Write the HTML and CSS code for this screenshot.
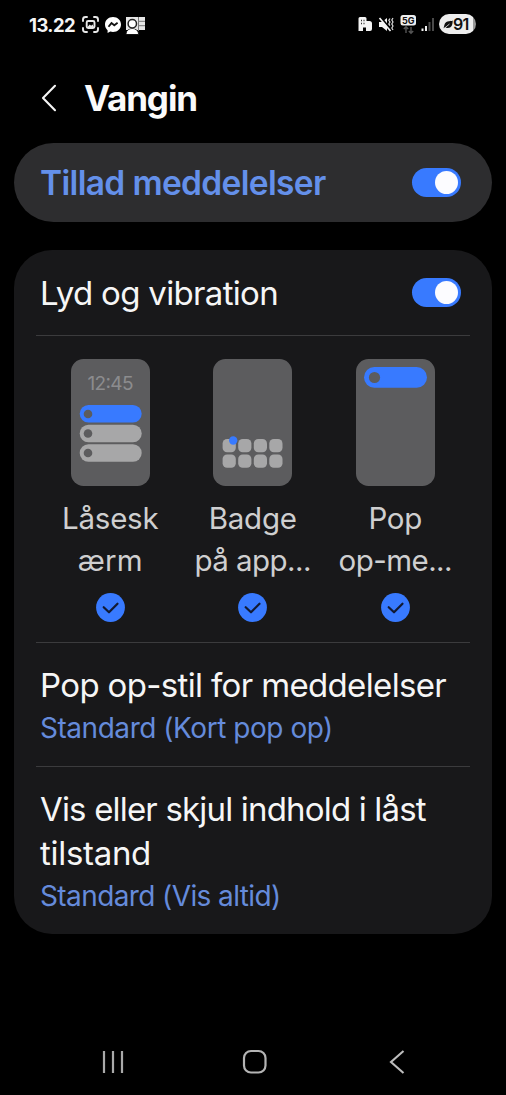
FILE: index.html
```html
<!DOCTYPE html>
<html lang="da">
<head>
<meta charset="utf-8">
<title>Vangin</title>
<link rel="stylesheet" href="styles.css">
</head>
<body>
<div class="screen">
  <header class="status">
    <span class="clock">13.22</span>
    <svg class="status-left" width="66" height="20" viewBox="0 0 66 20" fill="none">
      <g stroke="#e8e8e8" stroke-width="1.900" stroke-linecap="round">
        <path d="M2 6V4.500Q2 2 4.500 2H6M13 2h1.500Q17 2 17 4.500V6M17 13v1.500q0 2.500-2.500 2.500H13M6 17H4.500Q2 17 2 14.500V13"/>
        <rect x="5.700" y="6" width="7.800" height="7" rx="1.500"/>
      </g>
      <path d="M6.500 12l2.200-2.500 1.500 1.200 1.300-1.200 1.500 2.500z" fill="#e8e8e8"/>
      <path d="M32 2c-4.700 0-8 3.300-8 7.500 0 2.500 1 4.400 2.600 5.700V18l2.700-1.400c.9.300 1.800.400 2.700.400 4.700 0 8-3.300 8-7.500S36.700 2 32 2z" fill="#fff"/>
      <path d="M27.500 11.800l3-3.700 2.800 2.200 3.300-2.500" stroke="#111" stroke-width="1.800"/>
      <path d="M45 2h19v13H45z" fill="#e6e6e6"/>
      <path d="M57.500 2v14M58 6.300h6M58 10.700h6" stroke="#777" stroke-width="1"/>
      <path d="M45 19.500c0-4 2.500-5.500 6.300-5.500s6.200 1.500 6.200 5.500z" fill="#fff" stroke="#111" stroke-width="1"/>
      <circle cx="51.300" cy="8.700" r="4.200" fill="#fff" stroke="#222" stroke-width="1.500"/>
      <path d="M46 18.800c0-3 2-4.800 5.300-4.800s5.300 1.800 5.300 4.800z" fill="#fff"/>
    </svg>
    <svg class="status-right" width="78" height="22" viewBox="0 0 78 22" fill="none">
      <path d="M1.500 3.500Q1.500 2 3 2h5q1.500 0 1.500 1.500V6h3q2.500 0 2.500 2.500V14q0 2-2 2H9v-3.500H6V16H1.500z" fill="#f4f4f4"/>
      <path d="M4 5.500h1M6.500 5.500h1M4 8.500h1M6.500 8.500h1" stroke="#333" stroke-width="1.300"/>
      <path d="M22 7h3l5-4v13l-5-4h-3z" fill="#f4f4f4"/>
      <path d="M23.500 2l10.500 13" stroke="#000" stroke-width="2"/>
      <path d="M22.500 3l11 13" stroke="#f4f4f4" stroke-width="1.700"/>
      <path d="M33 3.500l-1.200 1.800 1.200 1.800-1.200 1.800 1.200 1.800M36 3l-1.200 2 1.200 2-1.200 2 1.200 2-1.200 2 1.200 2" stroke="#ddd" stroke-width="1.200"/>
      <rect x="43.500" y="0" width="15.500" height="10.500" rx="2.500" fill="#eee"/>
      <text class="net" x="51.200" y="8.500" text-anchor="middle">5G</text>
      <path d="M49 18v-6M46.800 14l2.200-2.300 2.200 2.300M54 12v6M51.800 16l2.200 2.300 2.200-2.300" stroke="#555" stroke-width="1.400"/>
      <path d="M65.500 16v-2.500M69 16v-5" stroke="#f0f0f0" stroke-width="2"/>
      <path d="M72.500 16V7M76 16V3" stroke="#4a4a4a" stroke-width="2"/>
    </svg>
    <span class="battery">
      <svg width="10" height="9" viewBox="0 0 10 9"><path d="M.500 8.300C1.500 6 1 2.500 4.500 1.500 6.500.900 8.500 1.300 9.700.500 9.700 5 8.500 8 4.800 8 3.500 8 3 7.300 2.500 7.200z" fill="#111"/><path d="M1 8.500L6.500 4" stroke="#eee" stroke-width=".8"/></svg>
      <span>91</span>
    </span>
  </header>

  <div class="titlebar">
    <svg class="back" width="16" height="28" viewBox="0 0 16 28" fill="none"><path d="M14 1.800L2 14l12 12.200" stroke="#f5f5f5" stroke-width="2.100" stroke-linecap="round" stroke-linejoin="round"/></svg>
    <h1 class="title">Vangin</h1>
  </div>

  <section class="allow">
    <span class="allow-text">Tillad meddelelser</span>
    <span class="toggle"><span class="knob"></span></span>
  </section>

  <main class="card">
    <div class="row sound">
      <span class="label t-sound">Lyd og vibration</span>
      <span class="toggle"><span class="knob"></span></span>
    </div>
    <div class="types">
      <div class="type">
        <svg width="79" height="127" viewBox="0 0 79 127">
          <rect width="79" height="127" rx="12.500" fill="#5c5c5e"/>
          <text class="mini-clock" x="39.500" y="31" text-anchor="middle" textLength="46">12:45</text>
          <rect x="8.700" y="46" width="62" height="17.500" rx="8.750" fill="#387aff"/>
          <rect x="8.700" y="65.700" width="62" height="17.500" rx="8.750" fill="#a7a7a8"/>
          <rect x="8.700" y="85.300" width="62" height="17.500" rx="8.750" fill="#a7a7a8"/>
          <g fill="#5c5c5e"><circle cx="17" cy="55" r="4.300"/><circle cx="17" cy="74.500" r="4.300"/><circle cx="17" cy="94" r="4.300"/></g>
        </svg>
        <p class="caption"><span class="wide">Låsesk</span><br><span class="wider">ærm</span></p>
        <svg class="check" width="29" height="29" viewBox="0 0 29 29" fill="none"><circle cx="14.500" cy="14.500" r="14.400" fill="#387aff"/><path d="M7.700 14.200l5.300 5.100 8.500-8.600" stroke="#121a33" stroke-width="2.200" stroke-linecap="round" stroke-linejoin="round"/></svg>
      </div>
      <div class="type">
        <svg width="79" height="127" viewBox="0 0 79 127">
          <rect width="79" height="127" rx="12.500" fill="#5c5c5e"/>
          <g fill="#a7a7a8">
            <rect x="9.600" y="80" width="13.200" height="13.200" rx="4.500"/><rect x="25.200" y="80" width="13.200" height="13.200" rx="4.500"/><rect x="40.800" y="80" width="13.200" height="13.200" rx="4.500"/><rect x="56.300" y="80" width="13.200" height="13.200" rx="4.500"/>
            <rect x="9.600" y="95.500" width="13.200" height="13.200" rx="4.500"/><rect x="25.200" y="95.500" width="13.200" height="13.200" rx="4.500"/><rect x="40.800" y="95.500" width="13.200" height="13.200" rx="4.500"/><rect x="56.300" y="95.500" width="13.200" height="13.200" rx="4.500"/>
          </g>
          <circle cx="20.200" cy="81.500" r="4.200" fill="#387aff"/>
        </svg>
        <p class="caption"><span class="wide">Badge</span><br><span>på app...</span></p>
        <svg class="check" width="29" height="29" viewBox="0 0 29 29" fill="none"><circle cx="14.500" cy="14.500" r="14.400" fill="#387aff"/><path d="M7.700 14.200l5.300 5.100 8.500-8.600" stroke="#121a33" stroke-width="2.200" stroke-linecap="round" stroke-linejoin="round"/></svg>
      </div>
      <div class="type">
        <svg width="79" height="127" viewBox="0 0 79 127">
          <rect width="79" height="127" rx="12.500" fill="#5c5c5e"/>
          <rect x="8" y="8" width="63" height="20.800" rx="10.400" fill="#387aff"/>
          <circle cx="18.500" cy="18.500" r="5.600" fill="#5c5c5e"/>
        </svg>
        <p class="caption"><span class="wide">Pop</span><br><span>op-me...</span></p>
        <svg class="check" width="29" height="29" viewBox="0 0 29 29" fill="none"><circle cx="14.500" cy="14.500" r="14.400" fill="#387aff"/><path d="M7.700 14.200l5.300 5.100 8.500-8.600" stroke="#121a33" stroke-width="2.200" stroke-linecap="round" stroke-linejoin="round"/></svg>
      </div>
    </div>
    <div class="row setting">
      <span class="label t-style">Pop op-stil for meddelelser</span>
      <span class="value v-style">Standard (Kort pop op)</span>
    </div>
    <div class="row setting">
      <span class="label t-lock">Vis eller skjul indhold i låst<br><span class="t-lock2">tilstand</span></span>
      <span class="value v-lock">Standard (Vis altid)</span>
    </div>
  </main>

  <nav class="nav">
    <svg width="22" height="24" viewBox="0 0 22 24"><path d="M2 1v22M11 1v22M20 1v22" stroke="#a9a9a9" stroke-width="2.200"/></svg>
    <svg class="home" width="26" height="26" viewBox="0 0 26 26"><rect x="2" y="2" width="21.500" height="21.500" rx="7" fill="none" stroke="#b4b4b4" stroke-width="2.200"/></svg>
    <svg width="16" height="24" viewBox="0 0 16 24" fill="none"><path d="M14.500 1L2 12l12.500 11" stroke="#bdbdbd" stroke-width="2.100"/></svg>
  </nav>
</div>
</body>
</html>
```

FILE: styles.css
```css
* { box-sizing: border-box; }
body { margin: 0; background: #000; font-family: Inter, "Liberation Sans", sans-serif; }
h1, p { margin: 0; }
svg { display: block; flex: none; }
.screen { width: 506px; height: 1095px; display: flex; flex-direction: column; background: #000; overflow: hidden; }

.status { height: 56px; padding: 14px 30px 0 29px; display: flex; align-items: flex-start; color: #f5f5f5; }
.clock { width: 52px; font-size: 18.500px; line-height: 22px; font-weight: 700; letter-spacing: -0.600px; white-space: nowrap; }
.status-left { margin-top: 1px; }
.status-right { margin: 1px 4px 0 auto; }
.net { font-size: 9px; font-weight: 700; fill: #111; }
.battery { width: 37px; height: 20px; border-radius: 10px; background: linear-gradient(90deg, #eee 91%, #999 91%); color: #111; display: flex; align-items: center; padding-left: 4px; font-size: 16px; font-weight: 600; letter-spacing: -0.800px; line-height: 20px; }

.titlebar { height: 87px; display: flex; align-items: center; padding-left: 41px; gap: 27px; }
.back { margin-bottom: 3px; }
.title { font-size: 35px; line-height: 44px; font-weight: 700; color: #fafafa; white-space: nowrap; letter-spacing: -1.100px; padding-bottom: 3px; }

.allow { height: 79px; margin: 0 14px; padding: 0 31px 0 26px; border-radius: 40px; background: #2d2d2f; display: flex; align-items: center; justify-content: space-between; }
.allow-text { font-size: 33.500px; line-height: 44px; font-weight: 600; color: #6490ea; letter-spacing: -0.660px; white-space: nowrap; padding-top: 1px; }
.toggle { width: 49.500px; height: 29px; border-radius: 15px; background: #387aff; padding: 3px; display: flex; justify-content: flex-end; flex: none; }
.knob { width: 23px; height: 23px; border-radius: 50%; background: #fcfcff; }

.card { margin: 28px 14px 0; height: 684px; border-radius: 38px; background: #18181a; padding: 0 22px; }
.row { padding-left: 4px; }
.sound { height: 86px; padding-right: 9px; display: flex; align-items: center; justify-content: space-between; border-bottom: 1px solid #3b3b3d; }
.label { font-size: 33px; line-height: 44px; color: #f6f6f6; white-space: nowrap; }
.types { height: 307px; padding: 23px 3px 0; display: grid; grid-template-columns: repeat(3, 142.500px); border-bottom: 1px solid #3b3b3d; }
.type { display: flex; flex-direction: column; align-items: center; white-space: nowrap; }
.mini-clock { font-size: 19px; fill: #8c8c8e; }
.caption { margin-top: 10.500px; font-size: 29.500px; line-height: 42px; text-align: center; color: #cfcfd0; letter-spacing: -0.550px; }
.wide { letter-spacing: -0.250px; }
.wider { letter-spacing: 0.200px; }
.check { margin-top: 12px; }
.setting { padding-top: 20px; padding-bottom: 19px; display: flex; flex-direction: column; }
.setting + .setting { border-top: 1px solid #3b3b3d; }
.value { font-size: 28px; line-height: 40px; color: #658bdb; white-space: nowrap; padding-top: 1px; margin-bottom: -1px; }

.t-sound { letter-spacing: -0.680px; }
.t-style { letter-spacing: -0.650px; }
.t-lock { letter-spacing: -0.820px; }
.t-lock2 { letter-spacing: -0.300px; }
.v-style { letter-spacing: -0.460px; }
.v-lock { letter-spacing: -0.600px; }

.nav { margin-top: 113px; height: 30px; padding: 0 101px 0 102px; display: flex; align-items: center; justify-content: space-between; }
.home { margin-right: 4px; }
```
